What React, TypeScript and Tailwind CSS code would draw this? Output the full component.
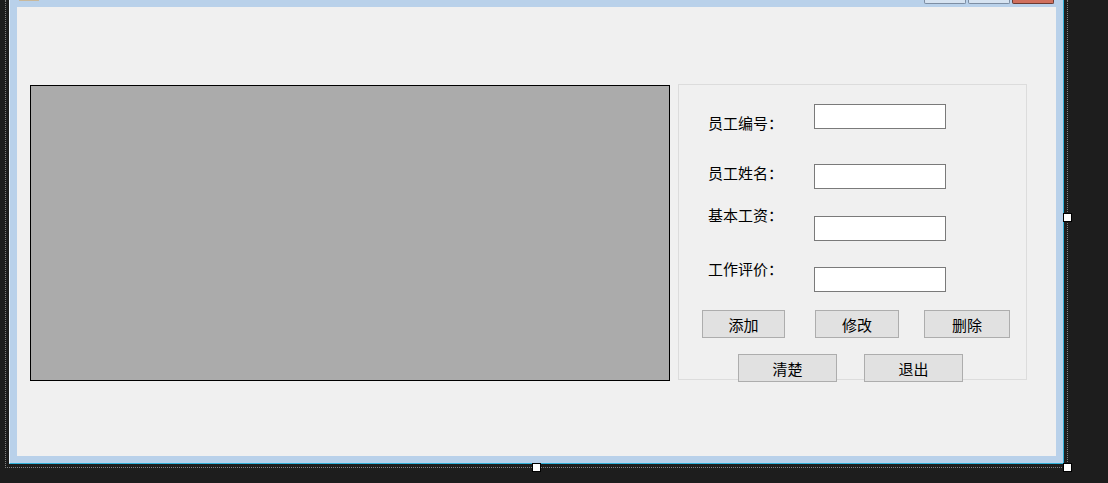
import React from "react";

const font = { fontFamily: '"Noto Sans CJK SC", "Noto Sans", sans-serif' };

function Label({ text, mt }: { text: string; mt: string }) {
  return (
    <div className={`w-[106px] shrink-0 text-[15px] leading-[15px] text-black whitespace-nowrap ${mt}`}>{text}</div>
  );
}

function TextBox({ mt }: { mt: string }) {
  return <div className={`w-[132px] h-[25px] shrink-0 bg-white border border-[#7a7a7a] ${mt}`} />;
}

function Btn({ text, w }: { text: string; w: string }) {
  return (
    <div className={`${w} h-[28px] shrink-0 bg-[#e1e1e1] border border-[#adadad] flex items-center justify-center text-[15px] leading-[15px] text-black`}>
      {text}
    </div>
  );
}

export default function App() {
  return (
    <div className="relative w-[1108px] h-[483px] bg-[#1d1d1d] overflow-hidden" style={font}>
      {/* selection rectangle (dotted) */}
      <div className="ml-[5px] w-[1063px] h-[468px] border-l border-r border-b border-dotted border-[#808080] pl-[3px]">
        {/* form */}
        <div className="w-[1055px] h-[464px] bg-[#b9d1ea] border-l border-l-[#e6eef7] border-r border-b border-r-[#2fb0d8] border-b-[#2fb0d8] flex flex-col">
          {/* title bar strip */}
          <div className="h-[7px] shrink-0 flex items-start pl-[9px] pr-[9px]">
            <div className="w-[20px] h-[1px] bg-[#c9b99c]" />
            <div className="flex-1" />
            <div className="flex gap-[2px]">
              <div className="w-[42px] h-[4px] bg-[#d6e3f1] border-l border-r border-b border-[#7d8ea3] rounded-b-[2px]" />
              <div className="w-[42px] h-[4px] bg-[#d6e3f1] border-l border-r border-b border-[#7d8ea3] rounded-b-[2px]" />
              <div className="w-[42px] h-[4px] bg-[#d0705e] border-l border-r border-b border-[#6b3a33] rounded-b-[2px]" />
            </div>
          </div>
          {/* client area */}
          <div className="mx-[7px] h-[449px] shrink-0 bg-[#f0f0f0] flex items-start pl-[13px] pt-[77px] gap-[8px]">
            {/* data grid */}
            <div className="mt-[1px] w-[640px] h-[296px] shrink-0 bg-[#ababab] border border-black" />
            {/* group box */}
            <div className="w-[349px] h-[296px] shrink-0 border border-[#dcdcdc] flex flex-col">
              <div className="flex items-start h-[50px] shrink-0 pl-[29px]">
                <Label text="员工编号：" mt="mt-[30px]" />
                <TextBox mt="mt-[19px]" />
              </div>
              <div className="flex items-start h-[55px] shrink-0 pl-[29px]">
                <Label text="员工姓名：" mt="mt-[30px]" />
                <TextBox mt="mt-[29px]" />
              </div>
              <div className="flex items-start h-[51px] shrink-0 pl-[29px]">
                <Label text="基本工资：" mt="mt-[17px]" />
                <TextBox mt="mt-[26px]" />
              </div>
              <div className="flex items-start h-[51px] shrink-0 pl-[29px]">
                <Label text="工作评价：" mt="mt-[20px]" />
                <TextBox mt="mt-[26px]" />
              </div>
              <div className="flex shrink-0 mt-[18px] pl-[23px]">
                <Btn text="添加" w="w-[83px]" />
                <div className="w-[30px] shrink-0" />
                <Btn text="修改" w="w-[84px]" />
                <div className="w-[25px] shrink-0" />
                <Btn text="删除" w="w-[86px]" />
              </div>
              <div className="flex shrink-0 mt-[16px] pl-[59px]">
                <Btn text="清楚" w="w-[99px]" />
                <div className="w-[27px] shrink-0" />
                <Btn text="退出" w="w-[99px]" />
              </div>
            </div>
          </div>
        </div>
      </div>
      {/* resize handles */}
      <div className="absolute left-[1063px] top-[213px] w-[9px] h-[9px] bg-white border border-black" />
      <div className="absolute left-[532px] top-[463px] w-[9px] h-[9px] bg-white border border-black" />
      <div className="absolute left-[1063px] top-[463px] w-[9px] h-[9px] bg-white border border-black" />
    </div>
  );
}
